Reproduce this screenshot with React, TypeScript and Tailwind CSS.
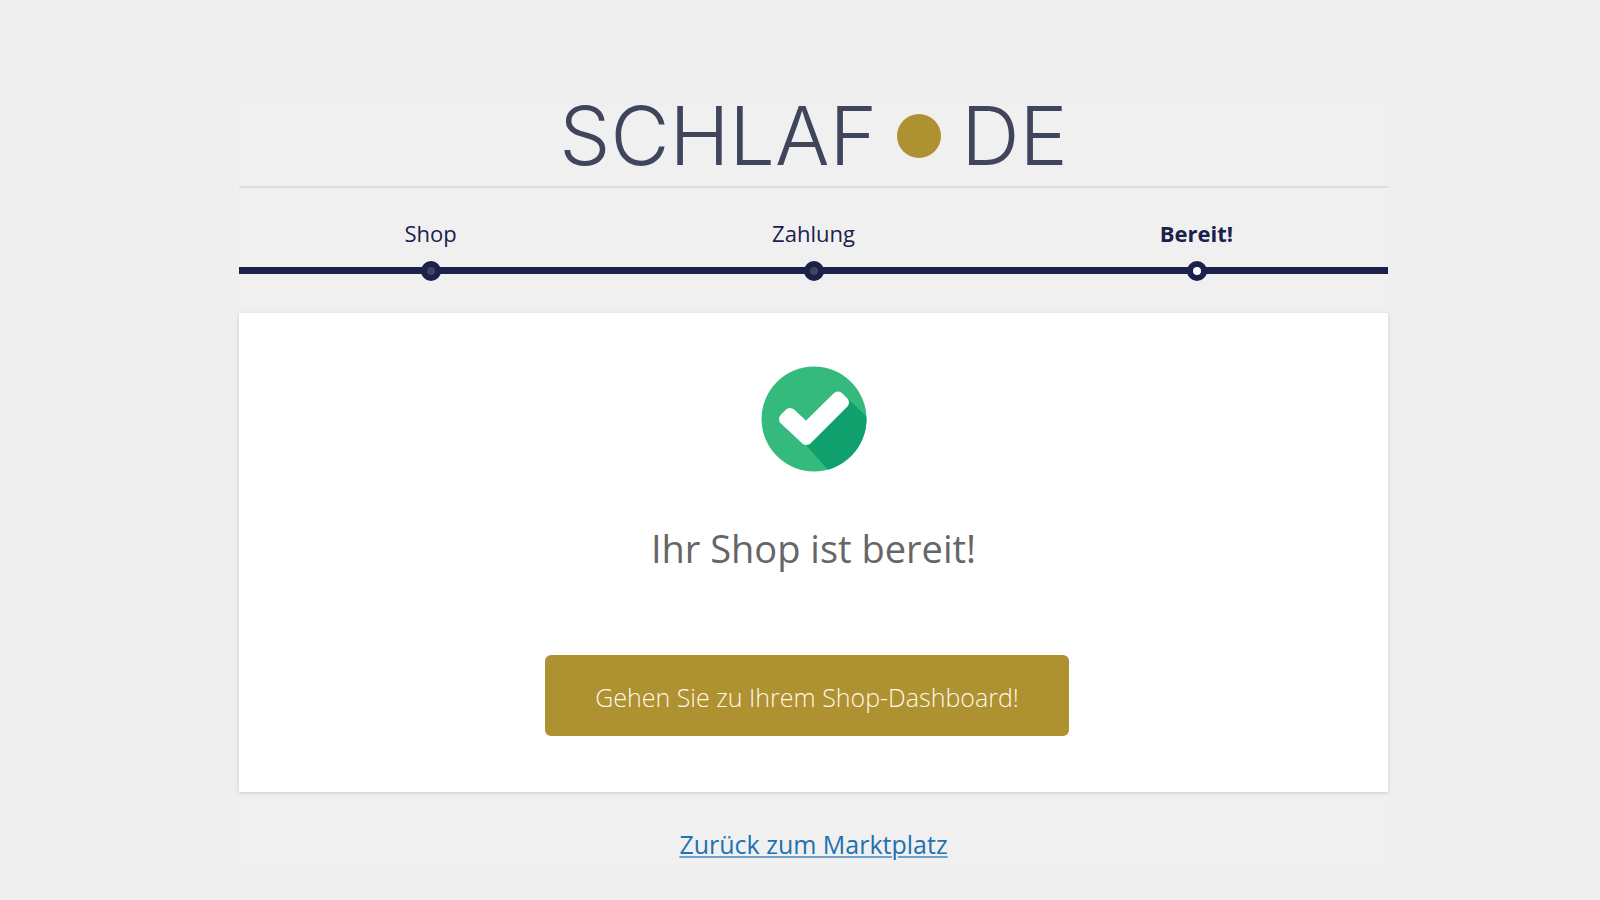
import React from 'react';

const steps = [
  { label: 'Shop', active: false },
  { label: 'Zahlung', active: false },
  { label: 'Bereit!', active: true },
];

function Logo() {
  return (
    <h1 className="border-b-2 border-[#dedede] pb-5">
      <a
        href="#"
        aria-label="Schlaf.de"
        className="flex items-center justify-center gap-5 h-[60px] font-['Inter',sans-serif] font-light text-[81px] leading-[62px] text-[#40455b]"
      >
        <span>SCHLAF</span>
        <span className="w-11 h-11 rounded-full bg-[#ae9131]" />
        <span>DE</span>
      </a>
    </h1>
  );
}

function Steps() {
  return (
    <ol className="grid grid-cols-3 pt-[29px] text-[#1a224c]">
      {steps.map(step => (
        <li
          key={step.label}
          className={`relative border-b-[7px] border-[#1a224c] pb-[18px] text-center text-[22px] leading-8 ${step.active ? 'font-bold' : ''}`}
        >
          {step.label}
          <span
            className={`absolute left-1/2 -bottom-[14px] -translate-x-1/2 w-5 h-5 rounded-full border-[6px] border-[#1a224c] ${step.active ? 'bg-white' : 'bg-[#40455b]'}`}
          />
        </li>
      ))}
    </ol>
  );
}

function CheckIcon() {
  return (
    <svg width="106" height="106" viewBox="0 0 106 106" className="mx-auto" aria-hidden="true">
      <defs>
        <clipPath id="disc">
          <circle cx="53" cy="53" r="52.5" />
        </clipPath>
      </defs>
      <circle cx="53" cy="53" r="52.5" fill="#35ba7d" />
      <path d="M86 32L106 51V106H69L44 78Z" fill="#0fa06e" clipPath="url(#disc)" />
      <path
        d="M24 53L29 48L45 63L77 31.500L82 36.500L45.500 73Z"
        fill="#fff"
        stroke="#fff"
        strokeWidth="12"
        strokeLinejoin="round"
      />
    </svg>
  );
}

export default function App() {
  return (
    <div className="min-h-screen bg-[#efefef] pl-[27px] pt-[106px] pb-9 font-['Open_Sans',sans-serif]">
      <div className="mx-auto w-full max-w-[1149px] bg-[#f0f0f0]">
        <Logo />
        <Steps />
        <main className="mt-[39px] bg-white pt-[53px] pb-14 text-center shadow-[0_1px_4px_rgba(0,0,0,0.16)]">
          <CheckIcon />
          <h2 className="mt-12 text-[38px] leading-[56px] text-[#666]">Ihr Shop ist bereit!</h2>
          <div className="mt-[79px] pr-[13px]">
            <button
              type="button"
              className="w-[524px] h-[81px] rounded-md bg-[#ae9131] pt-1 text-[25px] font-light text-[#fff8e6] cursor-pointer"
            >
              Gehen Sie zu Ihrem Shop-Dashboard!
            </button>
          </div>
        </main>
        <p className="pt-8 text-center text-[25px] leading-10">
          <a href="#" className="text-[#2271b1] underline decoration-2 underline-offset-2 decoration-[#6f9fcb]">
            Zurück zum Marktplatz
          </a>
        </p>
      </div>
    </div>
  );
}
